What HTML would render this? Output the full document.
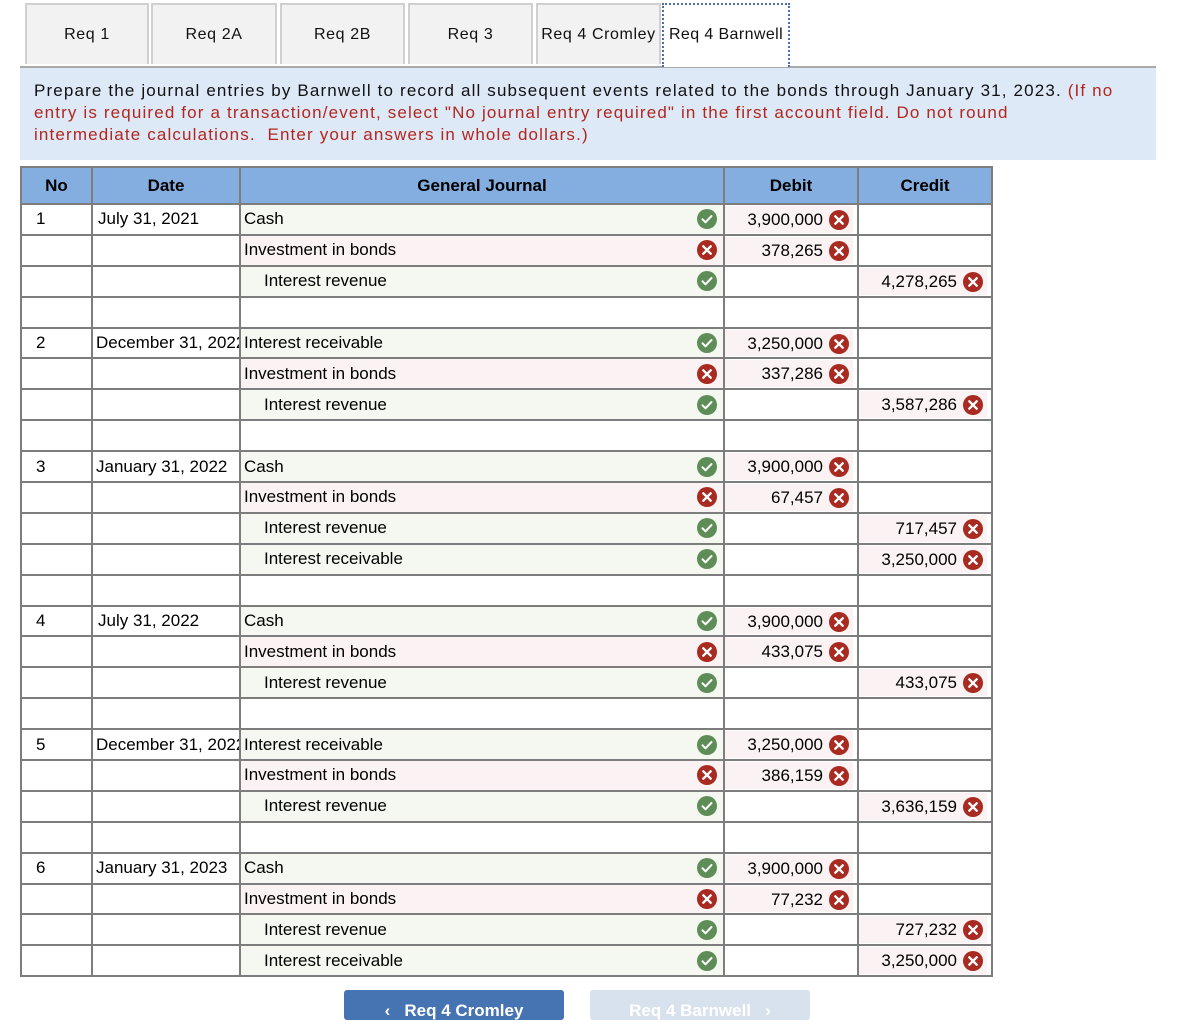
<!DOCTYPE html>
<html><head><meta charset="utf-8"><style>
body{margin:0;width:1188px;height:1018px;overflow:hidden;background:#fff;font-family:"Liberation Sans",Arial,sans-serif;position:relative}
.tab{position:absolute;top:3px;height:61px;background:#f2f2f2;border:2px solid #d0d0d0;border-bottom:none;font-size:16px;letter-spacing:0.6px;text-align:center;line-height:60px;color:#111;box-sizing:border-box;white-space:nowrap}
.tab.act{background:#fff;border:2px dotted #4a6fa8;border-bottom:none;height:64px}
.line{position:absolute;left:20px;top:66px;width:1136px;height:2px;background:#a9a9a9}
.info{position:absolute;left:20px;top:68px;width:1136px;height:92px;background:#dde9f6;box-sizing:border-box;padding:12px 14px;font-size:17px;line-height:22px;color:#111;letter-spacing:1.15px;white-space:nowrap}
.info span{color:#b3261e}
table{position:absolute;left:20px;top:166px;width:971px;border-collapse:collapse;table-layout:fixed;font-size:17px}
tr{height:30.9px}
tr.h{height:37px}
td,th{border:2px solid #7d7d7d;padding:0;white-space:nowrap;overflow:hidden}
th{background:#84aee0;font-size:17px}
.no{padding-left:14px}
.dt{padding-left:5px}
.ac{padding-left:3px;position:relative}
.ac.in{padding-left:23px}
.g{background:#f5f8f1}.r{background:#fbf3f3}
.ic{position:absolute;right:6px;top:50%;margin-top:-10px;width:20px;height:20px}
.v{position:relative}
.v div{position:absolute;left:0;right:4px;top:1px;bottom:1px;background:#fbf3f3;text-align:right;padding-right:30px;line-height:28px}
.v svg{position:absolute;right:4px;top:4px;width:20px;height:20px}
.btn{position:absolute;top:990px;height:30px;border-radius:3px;color:#fff;font-weight:bold;font-size:17px;line-height:42px;text-align:center}
</style></head><body>
<div class="tab" style="left:25px;width:124px">Req 1</div>
<div class="tab" style="left:151px;width:126px">Req 2A</div>
<div class="tab" style="left:280px;width:125px">Req 2B</div>
<div class="tab" style="left:408px;width:125px">Req 3</div>
<div class="tab" style="left:536px;width:125px">Req 4 Cromley</div>
<div class="line"></div>
<div class="tab act" style="left:662px;width:128px;letter-spacing:0.4px">Req 4 Barnwell</div>
<div class="info">Prepare the journal entries by Barnwell to record all subsequent events related to the bonds through January 31, 2023. <span>(If no<br>entry is required for a transaction/event, select "No journal entry required" in the first account field. Do not round<br>intermediate calculations.&nbsp; Enter your answers in whole dollars.)</span></div>
<svg width="0" height="0" style="position:absolute"><defs>
<symbol id="ok" viewBox="0 0 20 20"><circle cx="10" cy="10" r="10" fill="#5f8d58"/><path d="M5.5 10.3l3 3 6-6.3" stroke="#fff" stroke-width="2" fill="none" stroke-linecap="round" stroke-linejoin="round"/></symbol>
<symbol id="no" viewBox="0 0 20 20"><circle cx="10" cy="10" r="10" fill="#a82a20"/><path d="M6.3 6.3l7.4 7.4M13.7 6.3l-7.4 7.4" stroke="#fff" stroke-width="2.4" stroke-linecap="round"/></symbol>
</defs></svg>
<table>
<colgroup><col style="width:71px"><col style="width:148px"><col style="width:484px"><col style="width:134px"><col style="width:134px"></colgroup>
<tr class="h"><th>No</th><th>Date</th><th>General Journal</th><th>Debit</th><th>Credit</th></tr>
<tr><td class="no">1</td><td class="dt">July 31, 2021</td><td class="ac g">Cash<svg class="ic"><use href="#ok"/></svg></td><td class="v"><div>3,900,000<svg><use href="#no"/></svg></div></td><td></td></tr>
<tr><td></td><td></td><td class="ac r">Investment in bonds<svg class="ic"><use href="#no"/></svg></td><td class="v"><div>378,265<svg><use href="#no"/></svg></div></td><td></td></tr>
<tr><td></td><td></td><td class="ac in g">Interest revenue<svg class="ic"><use href="#ok"/></svg></td><td></td><td class="v"><div>4,278,265<svg><use href="#no"/></svg></div></td></tr>
<tr><td></td><td></td><td></td><td></td><td></td></tr>
<tr><td class="no">2</td><td class="dt" style="padding-left:3px">December 31, 2022</td><td class="ac g">Interest receivable<svg class="ic"><use href="#ok"/></svg></td><td class="v"><div>3,250,000<svg><use href="#no"/></svg></div></td><td></td></tr>
<tr><td></td><td></td><td class="ac r">Investment in bonds<svg class="ic"><use href="#no"/></svg></td><td class="v"><div>337,286<svg><use href="#no"/></svg></div></td><td></td></tr>
<tr><td></td><td></td><td class="ac in g">Interest revenue<svg class="ic"><use href="#ok"/></svg></td><td></td><td class="v"><div>3,587,286<svg><use href="#no"/></svg></div></td></tr>
<tr><td></td><td></td><td></td><td></td><td></td></tr>
<tr><td class="no">3</td><td class="dt" style="padding-left:3px">January 31, 2022</td><td class="ac g">Cash<svg class="ic"><use href="#ok"/></svg></td><td class="v"><div>3,900,000<svg><use href="#no"/></svg></div></td><td></td></tr>
<tr><td></td><td></td><td class="ac r">Investment in bonds<svg class="ic"><use href="#no"/></svg></td><td class="v"><div>67,457<svg><use href="#no"/></svg></div></td><td></td></tr>
<tr><td></td><td></td><td class="ac in g">Interest revenue<svg class="ic"><use href="#ok"/></svg></td><td></td><td class="v"><div>717,457<svg><use href="#no"/></svg></div></td></tr>
<tr><td></td><td></td><td class="ac in g">Interest receivable<svg class="ic"><use href="#ok"/></svg></td><td></td><td class="v"><div>3,250,000<svg><use href="#no"/></svg></div></td></tr>
<tr><td></td><td></td><td></td><td></td><td></td></tr>
<tr><td class="no">4</td><td class="dt">July 31, 2022</td><td class="ac g">Cash<svg class="ic"><use href="#ok"/></svg></td><td class="v"><div>3,900,000<svg><use href="#no"/></svg></div></td><td></td></tr>
<tr><td></td><td></td><td class="ac r">Investment in bonds<svg class="ic"><use href="#no"/></svg></td><td class="v"><div>433,075<svg><use href="#no"/></svg></div></td><td></td></tr>
<tr><td></td><td></td><td class="ac in g">Interest revenue<svg class="ic"><use href="#ok"/></svg></td><td></td><td class="v"><div>433,075<svg><use href="#no"/></svg></div></td></tr>
<tr><td></td><td></td><td></td><td></td><td></td></tr>
<tr><td class="no">5</td><td class="dt" style="padding-left:3px">December 31, 2022</td><td class="ac g">Interest receivable<svg class="ic"><use href="#ok"/></svg></td><td class="v"><div>3,250,000<svg><use href="#no"/></svg></div></td><td></td></tr>
<tr><td></td><td></td><td class="ac r">Investment in bonds<svg class="ic"><use href="#no"/></svg></td><td class="v"><div>386,159<svg><use href="#no"/></svg></div></td><td></td></tr>
<tr><td></td><td></td><td class="ac in g">Interest revenue<svg class="ic"><use href="#ok"/></svg></td><td></td><td class="v"><div>3,636,159<svg><use href="#no"/></svg></div></td></tr>
<tr><td></td><td></td><td></td><td></td><td></td></tr>
<tr><td class="no">6</td><td class="dt" style="padding-left:3px">January 31, 2023</td><td class="ac g">Cash<svg class="ic"><use href="#ok"/></svg></td><td class="v"><div>3,900,000<svg><use href="#no"/></svg></div></td><td></td></tr>
<tr><td></td><td></td><td class="ac r">Investment in bonds<svg class="ic"><use href="#no"/></svg></td><td class="v"><div>77,232<svg><use href="#no"/></svg></div></td><td></td></tr>
<tr><td></td><td></td><td class="ac in g">Interest revenue<svg class="ic"><use href="#ok"/></svg></td><td></td><td class="v"><div>727,232<svg><use href="#no"/></svg></div></td></tr>
<tr><td></td><td></td><td class="ac in g">Interest receivable<svg class="ic"><use href="#ok"/></svg></td><td></td><td class="v"><div>3,250,000<svg><use href="#no"/></svg></div></td></tr>
</table>
<div class="btn" style="left:344px;width:220px;background:#4673b1">&lsaquo;&nbsp;&nbsp;&nbsp;Req 4 Cromley</div>
<div class="btn" style="left:590px;width:220px;background:#d8e2ee">Req 4 Barnwell&nbsp;&nbsp;&nbsp;&rsaquo;</div>
</body></html>
